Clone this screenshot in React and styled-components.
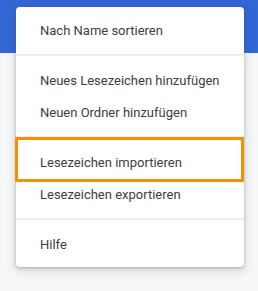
import React from "react";
import styled, { createGlobalStyle } from "styled-components";

const GlobalStyle = createGlobalStyle`
  html, body {
    margin: 0;
    padding: 0;
    background: #f6f7f9;
  }
  body {
    font-family: Roboto, "Liberation Sans", sans-serif;
  }
`;

const Page = styled.div`
  position: relative;
  width: 258px;
  height: 291px;
  overflow: hidden;
  background: #f6f7f9;
`;

const Toolbar = styled.div`
  height: 53px;
  background: #3367d6;
`;

const Menu = styled.div`
  position: absolute;
  top: 7px;
  left: 16px;
  width: 228px;
  padding: 7px 0;
  box-sizing: border-box;
  background: #fff;
  border-radius: 4px;
  box-shadow: 0 1px 3px rgba(60, 64, 67, 0.3), 0 3px 8px 2px rgba(60, 64, 67, 0.15);
  display: flex;
  flex-direction: column;
`;

const Item = styled.div`
  position: relative;
  height: 32px;
  display: flex;
  align-items: center;
  padding-left: 24px;
  font-size: 13px;
  color: #3c4043;
  white-space: nowrap;
`;

const Separator = styled.div`
  height: 2px;
  margin: 8px 0;
  background: #eceef1;
`;

const Highlight = styled.div`
  position: absolute;
  top: -9px;
  left: -1px;
  width: 229px;
  height: 45px;
  box-sizing: border-box;
  border: 3px solid #f39200;
  pointer-events: none;
`;

const groups = [
  ["Nach Name sortieren"],
  ["Neues Lesezeichen hinzufügen", "Neuen Ordner hinzufügen"],
  ["Lesezeichen importieren", "Lesezeichen exportieren"],
  ["Hilfe"],
];

const App = () => {
  return (
    <Page>
      <GlobalStyle />
      <Toolbar />
      <Menu>
        {groups.map((group, gi) => (
          <React.Fragment key={gi}>
            {gi > 0 && <Separator />}
            {group.map((label) => (
              <Item key={label}>
                {label}
                {label === "Lesezeichen importieren" && <Highlight />}
              </Item>
            ))}
          </React.Fragment>
        ))}
      </Menu>
    </Page>
  );
};

export default App;
